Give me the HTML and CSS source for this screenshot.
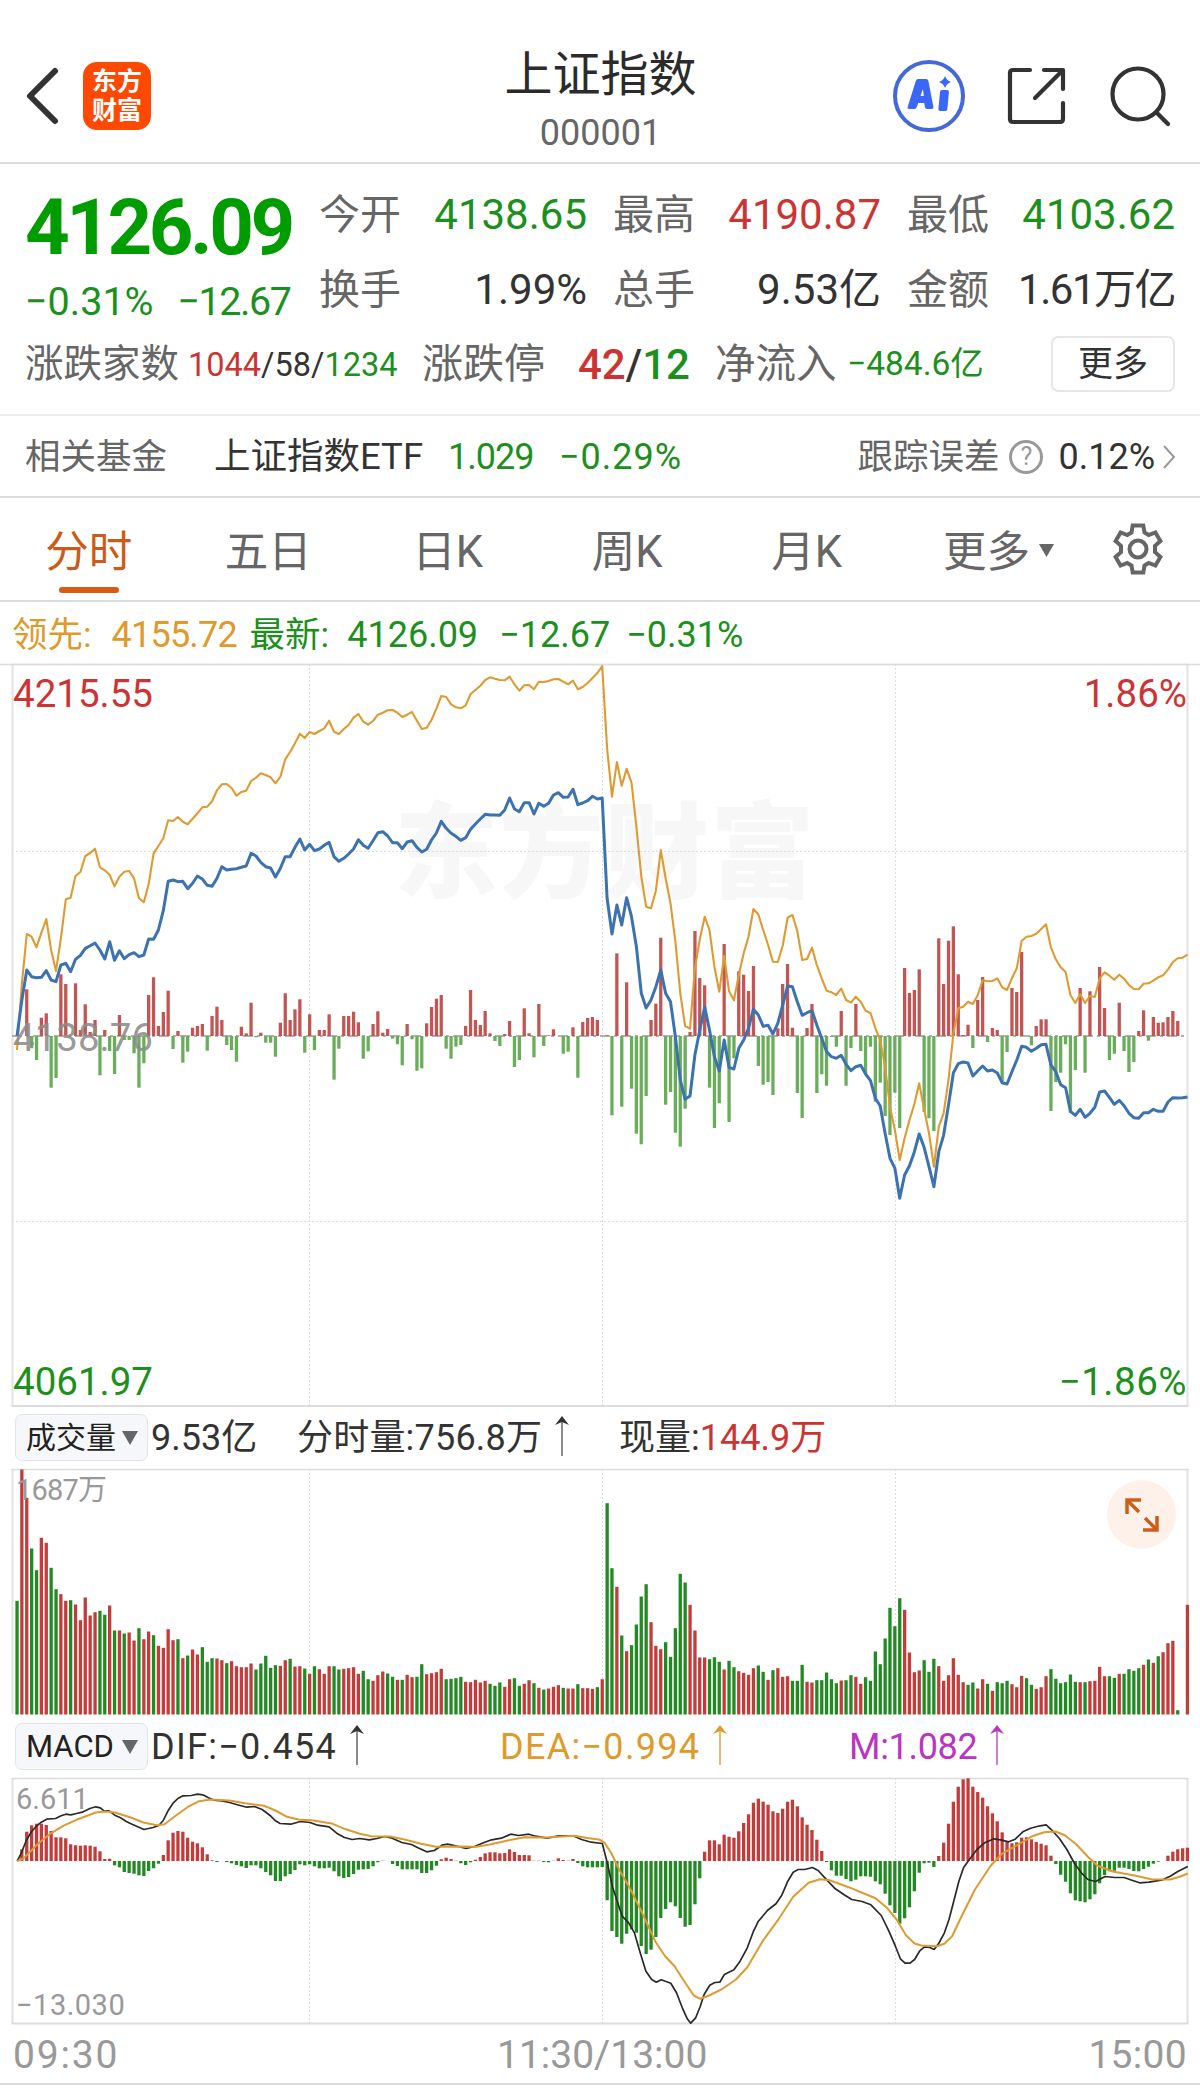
FILE: index.html
```html
<!DOCTYPE html>
<html lang="zh-CN">
<head>
  <meta charset="UTF-8">
  <title>上证指数 000001</title>
  <meta name="viewport" content="width=device-width, initial-scale=1.0">
  <link rel="stylesheet" href="styles.css">
</head>
<body>

  <header class="header">
    <div class="header-left">
      <svg class="back" width="36" height="60" viewBox="0 0 36 60"><path d="M30 5 L5 30 L30 55" fill="none" stroke="#333" stroke-width="6" stroke-linecap="round" stroke-linejoin="round"/></svg>
      <div class="logo"><span>东方</span><span>财富</span></div>
    </div>
    <div class="header-title">
      <h1>上证指数</h1>
      <p>000001</p>
    </div>
    <div class="header-right">
      <svg width="72" height="72" viewBox="0 0 72 72">
        <circle cx="36" cy="36" r="34" fill="none" stroke="#4468d8" stroke-width="4"/>
        <path d="M25 19h8q2 0 2.400 2l5 26q.3 2-1.700 2h-4.500q-2 0-2.300-2l-.7-4h-6l-1.200 3.500q-.8 2.500-3 2.500h-4.500q-2.500 0-1.700-2.500l8-25.500q.6-2 2.200-2zM27.500 36h3.300l-.9-7z" fill="#3a67f5"/>
        <path d="M49 30h5q2 0 1.900 2l-1.500 17q-.2 2-2.200 2h-5q-2 0-1.800-2l1.600-17q.2-2 2-2z" fill="#3a67f5"/>
        <path d="M52 16q1.500 4.500 6 6q-4.500 1.500-6 6q-1.500-4.500-6-6q4.500-1.500 6-6z" fill="#3a67f5"/>
      </svg>
      <svg width="60" height="60" viewBox="0 0 60 60" fill="none" stroke="#333" stroke-width="4.200" stroke-linecap="round" stroke-linejoin="round">
        <path d="M23 4H6q-3 0-3 3v46q0 3 3 3h47q3 0 3-3V37"/>
        <path d="M37 4h19v19M55 5L28 32"/>
      </svg>
      <svg width="62" height="62" viewBox="0 0 62 62" fill="none" stroke="#333" stroke-width="4.200" stroke-linecap="round">
        <circle cx="29" cy="29" r="25.500"/>
        <path d="M47.500 47.500L59 59"/>
      </svg>
    </div>
  </header>

  <section class="quote">
    <div class="quote-top">
      <div class="price">
        <div class="price-now green">4126.09</div>
        <div class="price-change green"><span>−0.31%</span><span class="tight">−12.67</span></div>
      </div>
      <div class="stats">
        <div class="stat"><span>今开</span><b class="green">4138.65</b></div>
        <div class="stat"><span>最高</span><b class="red">4190.87</b></div>
        <div class="stat"><span>最低</span><b class="green">4103.62</b></div>
        <div class="stat"><span>换手</span><b>1.99%</b></div>
        <div class="stat"><span>总手</span><b>9.53亿</b></div>
        <div class="stat"><span>金额</span><b class="tight">1.61万亿</b></div>
      </div>
    </div>
    <div class="breadth">
      <span class="breadth-label">涨跌家数</span>
      <span class="breadth-count"><i class="red">1044</i>/58/<i class="green">1234</i></span>
      <span class="limit-label">涨跌停</span>
      <span class="limit-count"><i class="red">42</i>/<i class="green">12</i></span>
      <span class="flow-label">净流入</span>
      <span class="flow-value green">−484.6亿</span>
      <a class="more" href="#">更多</a>
    </div>
  </section>

  <section class="fund">
    <span class="fund-label">相关基金</span>
    <span class="fund-name">上证指数ETF</span>
    <span class="fund-price green">1.029</span>
    <span class="fund-change green">−0.29%</span>
    <span class="fund-error">跟踪误差</span>
    <span class="help">?</span>
    <span class="fund-rate">0.12%</span>
    <svg width="14" height="26" viewBox="0 0 14 26"><path d="M2 2L12 13L2 24" fill="none" stroke="#999" stroke-width="2"/></svg>
  </section>

  <nav class="tabs">
    <a class="tab active" href="#">分时</a>
    <a class="tab" href="#">五日</a>
    <a class="tab" href="#">日K</a>
    <a class="tab" href="#">周K</a>
    <a class="tab" href="#">月K</a>
    <a class="tab tab-more" href="#">更多<svg width="15" height="13" viewBox="0 0 14 12"><path d="M0 0h14L7 12z" fill="#666"/></svg></a>
    <svg class="gear" width="52" height="52" viewBox="0 0 52 52" fill="none" stroke="#666" stroke-width="4">
      <path d="M20.700 2.500h10.600l1.200 7 4.200 2.500 6.700-2.600 5 8.700-5.400 4.700v6.400l5.400 4.700-5 8.700-6.700-2.600-4.200 2.500-1.200 7H20.700l-1.200-7-4.200-2.500-6.700 2.600-5-8.700L9 29.200v-6.400l-5.400-4.700 5-8.700 6.700 2.600 4.200-2.500z"/>
      <circle cx="26" cy="26" r="8.500"/>
    </svg>
  </nav>

  <div class="legend">
    <span class="legend-label orange">领先:</span><span class="legend-lead orange">4155.72</span>
    <span class="legend-label green">最新:</span><span class="legend-last green">4126.09</span>
    <span class="legend-diff green">−12.67</span><span class="green">−0.31%</span>
  </div>

  <div class="chart chart-price">
    <div class="watermark">东方财富</div>
    <svg id="price" width="1176" height="742"></svg>
    <span class="mark mark-high red">4215.55</span>
    <span class="mark mark-high-pct red">1.86%</span>
    <span class="mark mark-mid">4138.76</span>
    <span class="mark mark-low green">4061.97</span>
    <span class="mark mark-low-pct green">−1.86%</span>
  </div>

  <div class="sub-legend">
    <span class="chip">成交量<svg width="16" height="14" viewBox="0 0 16 14"><path d="M0 0h16L8 14z" fill="#666"/></svg></span>
    <span class="vol-total">9.53亿</span>
    <span class="vol-minute">分时量:756.8万<svg class="arrow" width="14" height="40" viewBox="0 0 14 40"><path d="M7 4V40" stroke="#666" stroke-width="1.500"/><path d="M7 0L14 9L7 6L0 9z" fill="#333"/></svg></span>
    <span>现量:<i class="red">144.9万</i></span>
  </div>

  <div class="chart chart-volume">
    <svg id="volume" width="1176" height="245"></svg>
    <span class="mark mark-small mark-volume">1687万</span>
    <a class="expand" href="#"><svg width="34" height="34" viewBox="0 0 34 34" fill="none" stroke="#cc5f1c" stroke-width="3.500"><path d="M14 14L2 2M2 16V2H16M20 20L32 32M32 18V32H18"/></svg></a>
  </div>

  <div class="sub-legend macd-legend">
    <span class="chip chip-macd">MACD<svg width="16" height="14" viewBox="0 0 16 14"><path d="M0 0h16L8 14z" fill="#666"/></svg></span>
    <span class="dif">DIF:−0.454<svg class="arrow" width="14" height="40" viewBox="0 0 14 40"><path d="M7 4V40" stroke="#666" stroke-width="1.500"/><path d="M7 0L14 9L7 6L0 9z" fill="#333"/></svg></span>
    <span class="dea orange">DEA:−0.994<svg class="arrow" width="14" height="40" viewBox="0 0 14 40"><path d="M7 4V40" stroke="#e0a040" stroke-width="1.500"/><path d="M7 0L14 9L7 6L0 9z" fill="#e09a2b"/></svg></span>
    <span class="macd-value purple">M:1.082<svg class="arrow" width="14" height="40" viewBox="0 0 14 40"><path d="M7 4V40" stroke="#b45abf" stroke-width="1.500"/><path d="M7 0L14 9L7 6L0 9z" fill="#bb35c4"/></svg></span>
  </div>

  <div class="chart chart-macd">
    <svg id="macd" width="1176" height="245"></svg>
    <span class="mark mark-small">6.611</span>
    <span class="mark mark-small mark-bottom">−13.030</span>
  </div>

  <div class="times"><span class="time-open">09:30</span><span class="time-noon">11:30/13:00</span><span class="time-close">15:00</span></div>

  <script src="charts.js"></script>
</body>
</html>
```

FILE: styles.css
```css
* {
  box-sizing: border-box;
}
body {
  margin: 0;
  width: 1200px;
  height: 2091px;
  overflow: hidden;
  background-color: #fff;
  color: #333;
  font-family: Roboto, "Noto Sans CJK SC", sans-serif;
  font-size: 36px;
  white-space: nowrap;
}
a {
  color: inherit;
  text-decoration: none;
}
i, b {
  font-style: normal;
  font-weight: 400;
}
svg {
  display: block;
  flex: none;
}
.red { color: #cc3433; }
.green { color: #1c901c; }
.orange { color: #e09a2b; }
.purple { color: #bb35c4; }
.tight { letter-spacing: -1.5px; }

/* header */
.header {
  display: flex;
  justify-content: space-between;
  height: 164px;
  padding: 0 29px 0 25px;
  border-bottom: 2px solid #dcdcdc;
}
.header-left {
  display: flex;
  align-items: center;
  width: 300px;
  padding-top: 30px;
}
.logo {
  display: flex;
  flex-direction: column;
  justify-content: center;
  align-items: center;
  width: 68px;
  height: 68px;
  margin-left: 22px;
  border-radius: 14px;
  background-color: #ff4800;
  color: #fff;
  font-size: 25px;
  font-weight: 700;
  line-height: 29px;
}
.header-title {
  padding: 44px 0 0 5px;
  text-align: center;
}
.header-title h1 {
  margin: 0;
  font-size: 48px;
  font-weight: 400;
  line-height: 62px;
  color: #2b2b2b;
}
.header-title p {
  margin: 6px 0 0;
  font-size: 36px;
  line-height: 42px;
  color: #666;
}
.header-right {
  display: flex;
  align-items: center;
  justify-content: flex-end;
  gap: 42px;
  width: 300px;
  padding-top: 30px;
}

/* quote */
.quote {
  height: 250px;
  padding: 22px 25px 0 25px;
}
.quote-top {
  display: flex;
}
.price {
  width: 294px;
  padding-top: 4px;
}
.price-now {
  height: 84px;
  font-size: 78px;
  font-weight: 700;
  line-height: 76px;
  letter-spacing: -3.500px;
  color: #009c00;
}
.price-change {
  display: flex;
  gap: 24px;
  font-size: 39.500px;
  line-height: 56px;
}
.stats {
  display: grid;
  grid-template-columns: repeat(3, 268px);
  grid-auto-rows: 61px;
  column-gap: 26px;
  row-gap: 14px;
}
.stat {
  display: flex;
  align-items: baseline;
  justify-content: space-between;
  height: 61px;
  font-size: 42px;
  line-height: 58px;
}
.stat span {
  font-size: 41px;
  color: #666;
}
.breadth {
  display: flex;
  align-items: center;
  height: 56px;
  margin-top: 6px;
  line-height: 56px;
}
.breadth-label {
  width: 163px;
  font-size: 38.500px;
  color: #666;
}
.breadth-count {
  width: 234px;
  padding-top: 2px;
  font-size: 32.500px;
}
.limit-label {
  width: 156px;
  font-size: 41px;
  color: #666;
}
.limit-count {
  width: 137px;
  padding-top: 2px;
  font-size: 42px;
  font-weight: 500;
}
.limit-count i {
  font-weight: 500;
}
.flow-label {
  width: 132px;
  font-size: 40.500px;
  color: #666;
}
.flow-value {
  font-size: 33.500px;
}
.more {
  width: 124px;
  height: 56px;
  margin-left: auto;
  border: 2px solid #e6e6e6;
  border-radius: 7px;
  font-size: 35px;
  line-height: 54px;
  text-align: center;
}

/* fund */
.fund {
  display: flex;
  align-items: center;
  height: 84px;
  padding: 1px 24px 0 25px;
  border-top: 2px solid #ededed;
  border-bottom: 2px solid #dcdcdc;
  font-size: 36px;
  line-height: 44px;
}
.fund-label {
  width: 189px;
  font-size: 35.500px;
  color: #666;
}
.fund-name {
  width: 234px;
  font-size: 36.500px;
}
.fund-price {
  width: 111px;
  letter-spacing: -1px;
}
.fund-change {
  letter-spacing: 1px;
}
.fund-error {
  margin-left: auto;
  font-size: 35.500px;
  color: #666;
}
.help {
  width: 34px;
  height: 34px;
  margin: 0 15px 0 10px;
  border: 3px solid #999;
  border-radius: 50%;
  font-size: 25px;
  line-height: 28px;
  text-align: center;
  color: #999;
}
.fund-rate {
  margin-right: 7px;
}

/* tabs */
.tabs {
  display: flex;
  align-items: center;
  height: 104px;
  padding-right: 36px;
  border-bottom: 2px solid #dcdcdc;
  color: #666;
}
.tab {
  position: relative;
  width: 179.500px;
  padding: 7px 2px 0 0;
  font-size: 43.500px;
  line-height: 64px;
  text-align: center;
}
.active {
  color: #cc5a18;
}
.active::after {
  content: "";
  position: absolute;
  left: 59px;
  bottom: -8px;
  width: 60px;
  height: 6px;
  border-radius: 3px;
  background-color: #d95a12;
}
.tab-more {
  display: flex;
  align-items: center;
  justify-content: center;
  gap: 9px;
  width: 204px;
}
.tab-more svg {
  margin-top: -4px;
}
.gear {
  margin-left: auto;
}

/* legend */
.legend {
  display: flex;
  align-items: baseline;
  height: 62px;
  padding: 4px 0 0 12px;
  font-size: 36px;
  line-height: 58px;
}
.legend-label {
  font-size: 35.500px;
}
.legend-lead {
  width: 138px;
  margin-left: 20px;
  letter-spacing: -0.8px;
}
.legend-last {
  width: 152px;
  margin-left: 18px;
}
.legend-diff {
  width: 127px;
}

/* charts */
.chart {
  position: relative;
  width: 1176px;
  margin-left: 12px;
}
.chart-price {
  height: 742px;
}
.chart-volume,
.chart-macd {
  height: 246px;
}
.watermark {
  position: absolute;
  left: 382px;
  top: 106px;
  font-family: "Noto Sans CJK SC", sans-serif;
  font-size: 104px;
  font-weight: 900;
  line-height: 150px;
  letter-spacing: 1.5px;
  color: #f7f7f7;
}
.chart > svg {
  position: relative;
  overflow: visible;
}
.mark {
  position: absolute;
  left: 1px;
  font-size: 38.500px;
  line-height: 44px;
}
.mark-high { top: 8px; }
.mark-high-pct { top: 8px; left: auto; right: 1px; }
.mark-mid { top: 352px; color: rgba(140, 140, 140, 0.9); }
.mark-low { top: 696px; }
.mark-low-pct { top: 696px; left: auto; right: 1px; letter-spacing: 0.5px; }
.mark-small {
  top: 1px;
  left: 4px;
  font-size: 29px;
  line-height: 40px;
  color: #999;
}
.mark-volume {
  letter-spacing: -0.8px;
}
.mark-bottom {
  top: 207px;
  letter-spacing: 0.5px;
}
.sub-legend {
  display: flex;
  align-items: center;
  height: 63px;
  padding-left: 15px;
  font-size: 36px;
}
.sub-legend span {
  line-height: 46px;
}
.macd-legend {
  height: 63px;
}
.chip {
  display: flex;
  align-items: center;
  justify-content: space-between;
  width: 133px;
  height: 47px;
  margin-right: 3px;
  padding: 0 9px 0 10px;
  border: 1px solid #e2e4e6;
  border-radius: 7px;
  background-color: #f6f7fa;
  font-size: 30px;
  color: #222;
}
.chip-macd {
  font-size: 31px;
}
.vol-total {
  width: 146px;
}
.arrow {
  display: inline-block;
  margin-left: 13px;
  vertical-align: -6px;
}
.vol-minute {
  width: 322px;
  letter-spacing: 0.2px;
}
.dif {
  width: 349px;
  letter-spacing: 1.300px;
}
.dea {
  width: 349px;
  letter-spacing: 1.300px;
}
.macd-value {
  letter-spacing: -0.3px;
}
.expand {
  display: flex;
  align-items: center;
  justify-content: center;
  position: absolute;
  right: 12px;
  top: 11px;
  width: 69px;
  height: 69px;
  border-radius: 50%;
  background-color: #fef1ea;
}
.times {
  display: flex;
  height: 61px;
  padding: 0 13px;
  border-bottom: 2px solid #dcdcdc;
  font-size: 39px;
  line-height: 62px;
  color: #999;
}
.time-open {
  width: 484px;
  letter-spacing: 1.800px;
}
.time-close {
  margin-left: auto;
  letter-spacing: 0.3px;
}
```

FILE: charts.js
```js
// One value per minute, 09:30 - 15:00. Lines are stored in thirds of a pixel.
const STEP = 4.877;
const x = i => 5 + STEP * i;

const lastAm = [1128,1020,930,950,953,952,932,960,965,915,910,935,898,886,865,857,849,870,897,845,901,872,896,884,878,890,885,837,838,810,752,664,660,665,664,686,670,648,657,676,679,655,620,630,628,626,622,618,580,588,607,620,624,651,625,590,590,562,537,570,553,572,567,556,547,590,604,595,582,567,539,556,565,542,518,515,528,548,548,566,546,542,562,576,568,540,519,484,505,520,529,541,533,508,492,477,463,465,465,466,450,414,447,455,428,428,462,430,439,430,405,398,412,411,388,434,429,422,409,417,414,715,822,735,795,713,770,860,1000,1044,1020,980,930,1000,1025,1130,1260,1318,1308,1185,1110,1041,1110,1190,1233,1140,1222,1227,1165,1140,1105,1048,1065,1099,1096,1122,1090,1035,978,980];
const lastPm = [305,346,338,332,375,415,455,470,475,466,493,512,500,496,522,542,595,618,700,775,805,895,825,797,755,702,742,800,860,755,706,615,518,491,486,489,528,512,498,513,510,519,548,552,515,480,439,442,454,445,434,433,495,515,554,563,634,646,628,652,640,622,576,573,592,613,601,617,640,653,655,638,638,628,634,634,606,593,594,593,591];
const leadAm = [1170,970,822,830,862,818,777,870,933,835,718,713,648,636,588,579,566,622,631,645,679,650,635,633,655,714,727,672,580,558,535,481,483,471,485,493,476,460,442,440,424,391,373,372,384,407,396,392,363,353,340,345,352,370,350,298,276,250,221,234,216,222,213,205,182,215,222,207,195,173,162,185,194,183,164,158,151,150,158,171,164,156,182,207,203,180,146,108,111,133,142,145,136,102,90,77,60,52,56,60,61,50,73,92,76,75,88,65,66,63,58,57,65,73,62,88,81,69,54,39,18,265,410,306,377,326,368,500,650,740,745,692,570,655,730,845,1000,1098,1106,925,838,770,810,920,995,888,993,1021,945,880,830,747,763,810,855,905,906,857,773,765];
const leadPm = [93,180,177,143,195,235,272,277,285,266,300,308,290,305,332,339,385,420,500,620,690,780,715,660,612,550,628,700,800,680,640,540,400,325,320,305,312,285,241,244,243,235,262,270,235,205,122,110,108,101,87,73,142,178,202,216,285,309,283,309,288,291,235,217,227,239,224,236,255,267,268,251,250,242,232,226,208,187,175,173,164];

// Minute to minute strength, positive above the zero line
const force = [0,0,140,-37,-72,55,68,-155,-126,185,156,0,158,18,95,12,48,-118,18,-45,-114,63,-12,-12,-52,-155,-82,123,176,30,72,136,-39,15,-80,-47,25,30,36,-44,60,88,48,-27,-42,-77,28,8,100,-4,10,-20,-20,-62,40,128,48,80,110,-50,65,-42,18,18,65,-131,-38,60,60,73,41,-68,-46,36,74,10,21,-8,-25,-88,36,-10,-104,-97,38,87,112,123,-38,-68,-32,-27,30,138,48,33,75,8,-15,-30,6,45,-93,-72,83,8,-64,96,-30,2,20,0,-53,-47,26,-125,42,54,57,48,0,2,-238,248,-212,161,-158,-293,-325,-180,48,97,295,-206,-168,-290,-332,-218,12,315,174,152,-155,-276,-202,276,-258,-67,194,184,135,210,-90,-146,-138,-177,23,156,216,25,-171,-246,24,96,-171,-115,-149,-3,-32,75,-149,-36,96,-45,-112,-32,-197,-140,-240,-297,-170,-276,204,129,138,200,-228,-247,-285,293,156,286,329,185,3,34,-36,108,177,-18,24,18,-135,-48,144,132,252,0,-28,30,50,50,-225,-138,-110,-25,-230,-102,144,-110,134,0,207,84,-72,-53,100,-45,-108,-78,15,77,-14,57,40,41,57,75,45];

// Volume, negative when the price fell in that minute
const volume = [-341,735,650,-498,-433,530,515,-440,-376,361,341,-343,330,283,351,297,307,-311,-299,327,-252,252,-243,246,222,-259,226,249,-238,206,200,256,223,-226,169,-177,195,180,-202,-158,-169,168,163,-154,160,145,142,142,153,-135,-153,-176,-140,-148,146,163,-167,144,145,-138,122,-145,136,122,145,-145,-135,137,139,142,122,-131,-106,101,118,129,-123,-113,104,-104,119,112,-113,-151,121,124,127,137,-106,-107,-109,-113,98,97,104,96,101,-92,-86,-96,83,106,-109,-86,92,103,-94,80,-75,78,83,88,-80,78,78,-91,79,79,77,-82,106,-634,-439,383,-237,190,-208,-270,-354,-391,277,206,196,-217,-173,-259,-422,-396,329,252,171,171,-166,-172,-158,135,-161,-142,130,125,119,139,-147,-128,104,-133,139,113,115,-101,-101,-149,98,96,-103,-103,-126,-106,-94,102,-103,-118,113,92,-112,-101,-189,-151,-228,-320,-265,-349,314,186,127,132,-163,-128,-167,145,101,118,169,119,97,-89,-96,78,106,-92,71,-97,-94,-101,91,82,116,-109,-89,77,82,115,-136,-107,-94,-97,-120,-98,97,-97,100,101,143,115,-115,-110,122,-122,-136,-131,-139,149,-165,155,-175,187,214,221,-13,0,329];

const macd = [0,35,88,107,112,112,108,90,71,71,68,50,47,46,47,46,43,29,6,7,-13,-19,-33,-36,-38,-43,-45,-30,-22,-8,18,62,85,90,88,70,58,53,41,20,2,-3,0,-3,-7,-12,-16,-21,-13,-13,-22,-33,-43,-60,-60,-46,-39,-27,-10,-13,-10,-16,-22,-22,-20,-31,-46,-51,-48,-39,-26,-25,-24,-16,-4,1,0,-9,-15,-25,-25,-25,-25,-36,-36,-28,-14,5,10,6,1,-7,-12,-4,4,12,23,26,26,23,24,35,27,18,18,17,1,1,-3,-4,1,8,3,1,6,-6,-16,-19,-19,-19,-18,-118,-210,-228,-248,-218,-205,-215,-255,-279,-266,-228,-171,-144,-124,-136,-171,-197,-192,-130,-52,28,62,62,50,79,73,70,89,114,140,175,187,178,169,149,144,157,178,184,164,131,109,93,64,30,-3,-28,-44,-44,-54,-61,-56,-46,-46,-47,-61,-70,-98,-133,-156,-188,-172,-139,-91,-35,-7,-5,-18,15,55,112,178,223,245,248,223,207,190,164,143,119,86,60,53,56,70,71,65,57,52,47,16,-9,-41,-62,-97,-118,-121,-124,-115,-100,-67,-42,-31,-29,-20,-20,-24,-30,-31,-24,-17,-8,-2,0,16,28,35,38,40];

const dif = '45,455 56,430 69,392 82,367 95,350 108,338 122,329 145,327 160,319 172,314 185,316 200,312 215,308 235,297 250,292 262,295 272,304 285,304 300,317 315,325 330,336 345,344 360,352 376,360 400,354 415,348 427,332 440,302 452,281 465,267 478,259 500,258 516,254 530,256 545,265 560,272 580,274 600,279 620,286 645,293 665,291 685,300 705,317 720,334 732,342 760,344 785,336 810,339 830,347 860,352 880,371 900,384 920,390 940,387 965,391 985,387 1005,381 1025,386 1050,399 1075,405 1095,416 1115,427 1135,423 1155,407 1170,404 1190,409 1218,417 1240,411 1265,399 1285,391 1310,386 1335,374 1355,378 1382,374 1400,380 1430,386 1460,379 1498,379 1520,390 1545,398 1574,402 1588,465 1600,530 1626,620 1643,640 1658,670 1673,730 1688,785 1703,810 1715,818 1728,811 1753,821 1768,850 1783,895 1796,928 1805,941 1818,925 1830,890 1840,855 1855,827 1868,819 1881,818 1893,795 1918,781 1933,757 1953,715 1968,668 1981,637 2006,602 2028,583 2043,557 2058,517 2073,488 2086,480 2103,480 2123,474 2138,483 2158,508 2183,538 2208,557 2226,570 2253,576 2276,586 2303,618 2323,665 2340,710 2353,748 2365,761 2378,761 2390,750 2403,725 2416,712 2430,714 2441,720 2453,702 2468,670 2480,630 2493,572 2506,515 2518,475 2530,455 2553,420 2573,400 2598,388 2618,392 2636,397 2653,389 2673,367 2693,356 2718,349 2734,346 2748,361 2768,386 2788,420 2808,462 2826,490 2843,510 2863,516 2888,501 2913,504 2938,504 2958,512 2978,520 3003,518 3038,511 3058,500 3078,486 3104,471';
const dea = '45,455 60,448 80,425 100,402 130,374 165,349 200,331 250,309 275,306 300,309 340,323 375,339 410,347 430,344 460,318 490,293 520,275 550,270 600,273 640,281 690,289 720,303 750,322 780,330 820,333 870,343 900,358 940,373 970,380 1020,381 1060,391 1100,403 1140,412 1200,411 1245,412 1280,405 1330,392 1370,383 1430,384 1500,379 1540,386 1568,391 1580,400 1598,432 1618,480 1648,540 1678,610 1713,697 1738,740 1763,770 1788,815 1813,858 1830,868 1853,858 1888,838 1923,810 1953,773 1993,695 2033,632 2073,562 2113,520 2143,509 2168,512 2218,533 2258,552 2288,566 2318,595 2343,630 2368,678 2390,702 2408,708 2448,710 2468,703 2488,680 2513,620 2548,540 2588,470 2618,433 2658,407 2698,380 2728,368 2758,366 2783,377 2813,405 2843,442 2868,469 2908,486 2968,499 3008,509 3058,510 3083,502 3104,492';

const rect = (i, y, h, color, w = 3.3) =>
  `<rect x="${(x(i) - w / 2).toFixed(1)}" y="${y.toFixed(1)}" width="${w}" height="${h.toFixed(1)}" fill="${color}"/>`;
const line = (points, color, width) =>
  `<polyline points="${points}" fill="none" stroke="${color}" stroke-width="${width}" stroke-linejoin="round"/>`;
const vline = (px, h) =>
  `<line x1="${px}" x2="${px}" y1="0" y2="${h}" stroke="#ddd" stroke-dasharray="2 2"/>`;
const hline = py =>
  `<line x1="0" x2="1175" y1="${py}" y2="${py}" stroke="#ddd" stroke-dasharray="2 2"/>`;
const frame = (h, bottom) =>
  `<path d="M0.500 0V${h}M1175.500 0V${h}" stroke="#e2e2e2" stroke-width="2"/>` +
  `<path d="M-0.500 0.500H1176.500" stroke="#dcdcdc" stroke-width="1.500"/>` +
  (bottom ? `<path d="M-0.500 ${h}H1176.500" stroke="#dcdcdc" stroke-width="2"/>` : '');
const grid = h => [297.5, 590.5, 883.5].map(px => vline(px, h)).join('');

// price
const ZERO = 372;
const toPoints = (am, pm) => am.map(v => v / 3 - 4)
  .concat(pm.map(v => v / 3 + 236))
  .map((y, i) => x(i).toFixed(1) + ',' + y.toFixed(1)).join(' ');
document.getElementById('price').innerHTML =
  grid(742) + hline(187.5) + hline(557.5) + frame(742, true) +
  `<path d="M-12 0.500H1188" stroke="#dcdcdc" stroke-width="1.500"/>` +
  `<line x1="0" x2="1175" y1="${ZERO}" y2="${ZERO}" stroke="#999" stroke-width="1.500" stroke-dasharray="10 4 3 4"/>` +
  force.map((v, i) => v > 0 ? rect(i, ZERO - v / 3, v / 3, '#c25654') : rect(i, ZERO, -v / 3, '#6aae5c')).join('') +
  line(toPoints(leadAm, leadPm), '#de9b32', 2.1) +
  line(toPoints(lastAm, lastPm), '#3c72af', 3);

// volume
document.getElementById('volume').innerHTML =
  grid(245) + frame(245, false) +
  volume.map((v, i) => rect(i, 245.5 - Math.abs(v) / 3, Math.abs(v) / 3, v > 0 ? '#c23c3a' : '#228a22')).join('');

// macd
const scale = s => s.split(' ').map(p => {
  const [px, py] = p.split(',');
  return (px / 2.6133 - 12).toFixed(1) + ',' + (py / 3 - 68.5).toFixed(1);
}).join(' ');
document.getElementById('macd').innerHTML =
  grid(245) + frame(245.5, true) +
  macd.map((v, i) => v > 0 ? rect(i, 83 - v / 3, v / 3, '#c23c3a') : rect(i, 83, -v / 3, '#228a22')).join('') +
  line(scale(dif), '#2a2a2a', 1.7) +
  line(scale(dea), '#de9b32', 2);
```
